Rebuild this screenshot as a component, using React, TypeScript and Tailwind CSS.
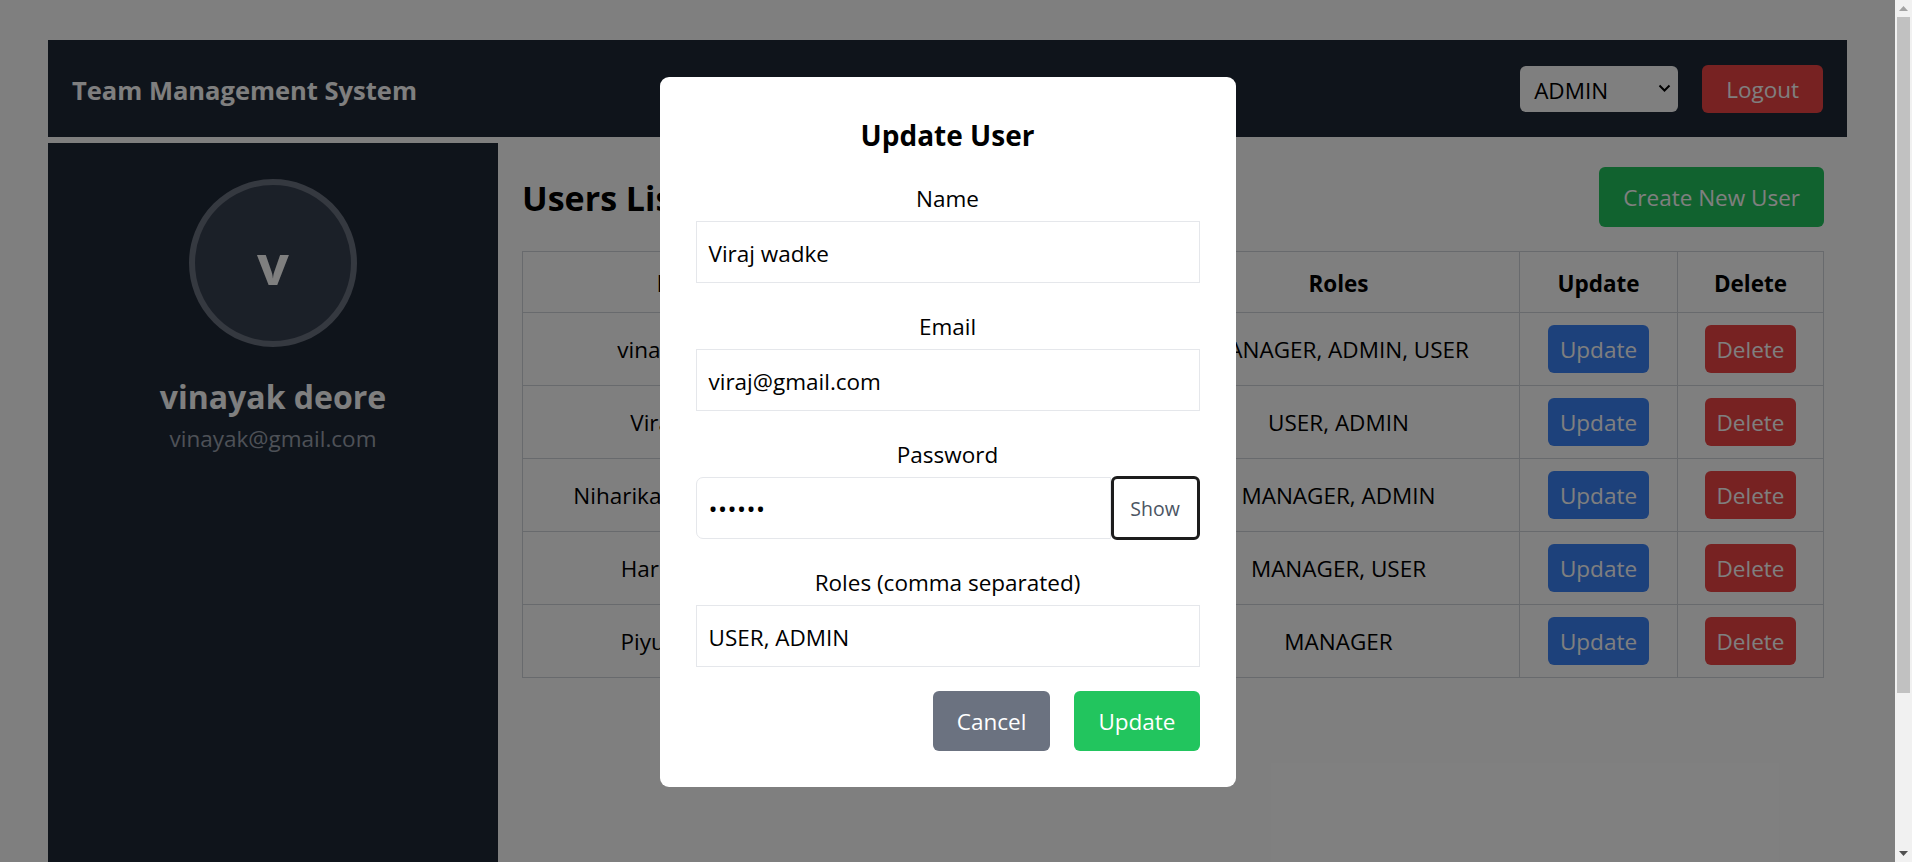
import React from "react";

const users = [
  { name: "vinayak deore", email: "vinayak@gmail.com", roles: "MANAGER, ADMIN, USER" },
  { name: "Viraj wadke", email: "viraj@gmail.com", roles: "USER, ADMIN" },
  { name: "Niharika Vishwakarma", email: "niharika@gmail.com", roles: "MANAGER, ADMIN" },
  { name: "Harish Pawar", email: "harish@gmail.com", roles: "MANAGER, USER" },
  { name: "Piyush Pawar", email: "piyush@gmail.com", roles: "MANAGER" },
];

function Field({ label, value }: { label: string; value: string }) {
  return (
    <div className="mb-[24px]">
      <label className="mb-[6px] block pt-[4px] text-center text-[22.5px] leading-[32px] text-black">{label}</label>
      <div className="flex h-[62px] items-center border border-[#e5e7eb] px-[12px] pt-[3px] text-[22.5px] text-black">
        {value}
      </div>
    </div>
  );
}

export default function App() {
  return (
    <div className="flex h-screen w-full overflow-hidden font-['Open_Sans',sans-serif] text-black">
      <div className="relative flex-1 overflow-hidden bg-white">
        <div className="px-[48px] pt-[40px]">
          <header className="flex h-[97px] items-center justify-between bg-[#1f2937] px-[24px]">
            <h1 className="pt-[2px] text-[25.5px] font-bold leading-[36px] text-white">Team Management System</h1>
            <div className="flex items-center gap-[24px]">
              <div className="flex h-[46px] w-[158px] items-center justify-between rounded-[6px] bg-white pl-[14px] pr-[7px] text-[22.5px] text-black">
                <span className="pt-[4px]">ADMIN</span>
                <svg width="13" height="9" viewBox="0 0 13 9" fill="none">
                  <path d="M1.5 1.5 L6.5 6.5 L11.5 1.5" stroke="#000" strokeWidth="2" />
                </svg>
              </div>
              <button className="h-[48px] rounded-[6px] bg-[#ef4444] px-[24px] pt-[2px] text-[22.5px] leading-[46px] text-white">
                Logout
              </button>
            </div>
          </header>
          <div className="mt-[6px] flex">
            <aside className="flex h-[900px] w-[450px] shrink-0 flex-col items-center bg-[#1f2937] p-[36px]">
              <div className="flex h-[168px] w-[168px] items-center justify-center rounded-full border-[6px] border-[#6b7280] bg-[#374151]">
                <span className="text-[56px] font-bold leading-none text-white">v</span>
              </div>
              <div className="mt-[28px] text-[32px] font-bold leading-[44px] text-white">vinayak deore</div>
              <div className="pt-[2px] text-[22.5px] leading-[36px] text-[#9ca3af]">vinayak@gmail.com</div>
            </aside>
            <main className="flex-1 p-[24px]">
              <div className="mb-[24px] flex h-[60px] items-center justify-between">
                <h2 className="pt-[2px] text-[34px] font-bold leading-[48px] text-black">Users List</h2>
                <button className="h-[60px] rounded-[6px] bg-[#22c55e] px-[24px] pt-[2px] text-[22.5px] text-white">
                  Create New User
                </button>
              </div>
              <table className="w-full table-fixed border-collapse text-[22.5px]">
                <colgroup>
                  <col className="w-[336px]" />
                  <col className="w-[299px]" />
                  <col className="w-[362px]" />
                  <col className="w-[158px]" />
                  <col className="w-[146px]" />
                </colgroup>
                <thead>
                  <tr>
                    {["Name", "Email", "Roles", "Update", "Delete"].map((h) => (
                      <th key={h} className="border border-[#d1d5db] pb-[10px] pt-[14px] text-center font-bold leading-[36px]">
                        {h}
                      </th>
                    ))}
                  </tr>
                </thead>
                <tbody>
                  {users.map((u) => (
                    <tr key={u.email}>
                      <td className="border border-[#d1d5db] pb-[11px] pt-[13px] text-center leading-[48px]">{u.name}</td>
                      <td className="border border-[#d1d5db] pb-[11px] pt-[13px] text-center leading-[48px]">{u.email}</td>
                      <td className="border border-[#d1d5db] pb-[11px] pt-[13px] text-center leading-[48px]">{u.roles}</td>
                      <td className="border border-[#d1d5db] py-[12px] text-center">
                        <span className="inline-block h-[48px] rounded-[6px] bg-[#3b82f6] px-[12px] pt-[2px] leading-[46px] text-white">
                          Update
                        </span>
                      </td>
                      <td className="border border-[#d1d5db] py-[12px] text-center">
                        <span className="inline-block h-[48px] rounded-[6px] bg-[#ef4444] px-[12px] pt-[2px] leading-[46px] text-white">
                          Delete
                        </span>
                      </td>
                    </tr>
                  ))}
                </tbody>
              </table>
            </main>
          </div>
        </div>

        <div className="absolute inset-0 flex items-center justify-center bg-black/50">
          <div className="mt-[2px] w-[576px] rounded-[9px] bg-white p-[36px]">
            <h2 className="mb-[24px] pt-[2px] text-center text-[28px] font-bold leading-[40px] text-black">Update User</h2>
            <Field label="Name" value="Viraj wadke" />
            <Field label="Email" value="viraj@gmail.com" />
            <div className="mb-[24px]">
              <label className="mb-[6px] block pt-[4px] text-center text-[22.5px] leading-[32px] text-black">Password</label>
              <div className="flex h-[62px] items-center">
                <div className="flex h-[62px] flex-1 items-center rounded-l-[7px] border border-[#e5e7eb] px-[12px] pt-[2px] text-[24px] tracking-[0.5px] text-black">
                  ••••••
                </div>
                <div className="flex h-[64px] w-[89px] items-center justify-center rounded-[6px] border-[3px] border-[#1c1c1c] bg-white pt-[2px] text-[19.5px] text-[#4b5563]">
                  Show
                </div>
              </div>
            </div>
            <Field label="Roles (comma separated)" value="USER, ADMIN" />
            <div className="flex justify-end gap-[24px]">
              <button className="h-[60px] rounded-[6px] bg-[#6b7280] px-[24px] pt-[2px] text-[22.5px] text-white">Cancel</button>
              <button className="h-[60px] rounded-[6px] bg-[#22c55e] px-[24px] pt-[2px] text-[22.5px] text-white">Update</button>
            </div>
          </div>
        </div>
      </div>

      <div className="flex w-[17px] shrink-0 flex-col bg-[#f1f1f1]">
        <div className="flex h-[17px] items-center justify-center">
          <svg width="9" height="5" viewBox="0 0 9 5">
            <path d="M0 5 L4.5 0 L9 5 Z" fill="#a3a3a3" />
          </svg>
        </div>
        <div className="mx-[2px] h-[676px] bg-[#c1c1c1]" />
        <div className="flex-1" />
        <div className="flex h-[17px] items-center justify-center">
          <svg width="9" height="5" viewBox="0 0 9 5">
            <path d="M0 0 L9 0 L4.5 5 Z" fill="#505050" />
          </svg>
        </div>
      </div>
    </div>
  );
}
